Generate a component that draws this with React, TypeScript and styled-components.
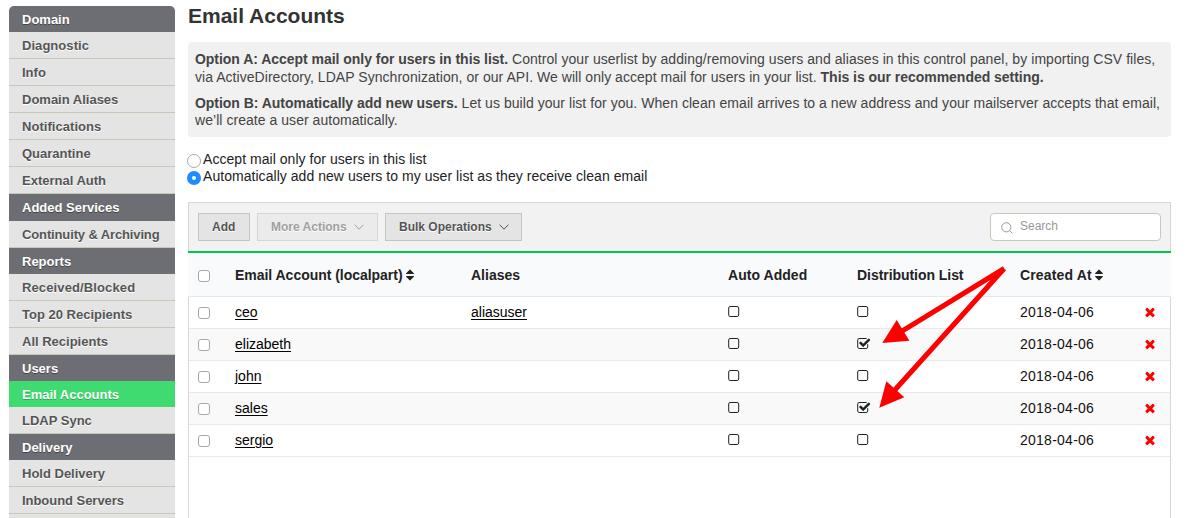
import React from "react";
import styled, { createGlobalStyle, css } from "styled-components";

const GlobalStyle = createGlobalStyle`
  * { box-sizing: border-box; }
  html, body { margin: 0; background: #fff; }
  body { font-family: "Liberation Sans", Arial, sans-serif; font-size: 14px; color: #222; overflow: hidden; }
`;

const Page = styled.div`
  position: relative;
  display: flex;
  width: 1200px;
  height: 518px;
  overflow: hidden;
`;

const Sidebar = styled.nav`
  width: 166px;
  margin: 6px 13px 0 9px;
  flex: none;
  border-radius: 5px 5px 0 0;
  overflow: hidden;
`;

type Kind = "heading" | "link" | "active";

const NavItem = styled.div<{ $kind: Kind; $height?: number; $spacing?: number }>`
  height: ${(p) => p.$height ?? (p.$kind === "link" ? 27 : 26)}px;
  line-height: 27px;
  padding-left: 13px;
  font-size: 13px;
  font-weight: bold;
  white-space: nowrap;
  letter-spacing: ${(p) => p.$spacing ?? 0}px;
  ${(p) =>
    p.$kind === "link"
      ? css`
          background: #e4e4e4;
          color: #555;
          text-shadow: 0 1px 0 #fff;
          border-bottom: 1px solid #c6c7b4;
        `
      : css`
          background: ${p.$kind === "active" ? "#3fdb70" : "#6d6e73"};
          color: #fff;
          text-shadow: 0 1px 0 ${p.$kind === "active" ? "#2fa955" : "#444"};
        `}
`;

const Main = styled.main`
  width: 983px;
  flex: none;
  display: flex;
  flex-direction: column;
`;

const Title = styled.h1`
  margin: 0;
  height: 42px;
  padding-top: 3px;
  font-size: 21px;
  line-height: 26px;
  color: #333;
`;

const InfoBox = styled.section`
  height: 95px;
  padding: 9px 7px;
  border-radius: 4px;
  background: #f1f1f1;
  color: #444;
`;

const Paragraph = styled.p<{ $leading: number }>`
  margin: 0 0 9px;
  line-height: ${(p) => p.$leading}px;
`;

const Line = styled.span<{ $spacing?: number }>`
  display: block;
  white-space: nowrap;
  letter-spacing: ${(p) => p.$spacing ?? 0.045}px;
`;

const Bold = styled.b`
  letter-spacing: -0.035px;
`;

const RadioGroup = styled.div`
  margin-top: 14px;
  height: 51px;
`;

const RadioRow = styled.label`
  display: flex;
  height: 17px;
  line-height: 17px;
  margin-left: -1px;
  gap: 2px;
  white-space: nowrap;
  letter-spacing: 0.045px;
`;

const Radio = styled.span<{ $on?: boolean }>`
  width: 14px;
  height: 14px;
  margin-top: 3px;
  border-radius: 50%;
  border: ${(p) => (p.$on ? "5px solid #1e8bff" : "1px solid #aaa")};
  background: #fff;
`;

const Panel = styled.section`
  flex: 1;
  border: 1px solid #d6d6d6;
  border-bottom: 0;
`;

const Toolbar = styled.div`
  display: flex;
  gap: 7px;
  height: 48px;
  padding: 10px 9px;
  background: #f2f2f2;
`;

const Button = styled.button<{ $width: number; $muted?: boolean }>`
  width: ${(p) => p.$width}px;
  height: 28px;
  padding: 0 0 0 13px;
  display: flex;
  align-items: center;
  gap: 7px;
  font: bold 12px "Liberation Sans", Arial, sans-serif;
  white-space: nowrap;
  color: ${(p) => (p.$muted ? "#a0a0a0" : "#555")};
  background: ${(p) => (p.$muted ? "#ebebeb" : "#e4e4e4")};
  border: 1px solid ${(p) => (p.$muted ? "#d6d6d6" : "#c4c4c4")};
  text-shadow: 0 1px 0 #fff;
`;

const SearchBox = styled.div`
  width: 171px;
  height: 28px;
  margin-left: auto;
  padding: 0 0 2px 10px;
  display: flex;
  align-items: center;
  gap: 7px;
  border: 1px solid #c8c8b8;
  border-radius: 4px;
  background: #fff;
  color: #999;
  font-size: 12px;
  svg { margin-top: 4px; }
`;

const grid = css`
  display: grid;
  grid-template-columns: 37px 236px 257px 129px 163px 122.6px 1fr;
  padding-left: 9px;
  align-items: center;
`;

const HeaderRow = styled.div`
  ${grid}
  height: 46px;
  margin: 0 -1px;
  padding-left: 10px;
  border-top: 2px solid #04c54c;
  border-bottom: 1px solid #e6e8e9;
  background: #f8fafc;
  font-weight: bold;
`;

const Row = styled.div<{ $alt: boolean }>`
  ${grid}
  height: 32px;
  padding-bottom: 2px;
  border-bottom: 1px solid #e9e9e9;
  background: ${(p) => (p.$alt ? "#f9f9f9" : "#fff")};
  color: #111;
`;

const Cell = styled.div<{ $spacing?: number }>`
  display: flex;
  align-items: center;
  gap: 3.5px;
  white-space: nowrap;
  letter-spacing: ${(p) => p.$spacing ?? 0}px;
`;

const Link = styled.a`
  color: #000;
  text-decoration: underline;
  text-underline-offset: 2px;
  text-decoration-thickness: 1px;
`;

const Checkbox = styled.span`
  width: 12px;
  height: 12px;
  margin-top: 2px;
  border: 1px solid #a8a8a8;
  border-radius: 3px;
  background: #fff;
`;

const Arrows = styled.svg`
  position: absolute;
  left: 870px;
  top: 260px;
`;

const icons = {
  times:
    "M1490 1322q0 40-28 68l-136 136q-28 28-68 28t-68-28l-294-294-294 294q-28 28-68 28t-68-28l-136-136q-28-28-28-68t28-68l294-294-294-294q-28-28-28-68t28-68l136-136q28-28 68-28t68 28l294 294 294-294q28-28 68-28t68 28l136 136q28 28 28 68t-28 68l-294 294 294 294q28 28 28 68z",
  square:
    "M1184 256h-832q-66 0-113 47t-47 113v832q0 66 47 113t113 47h832q66 0 113-47t47-113v-832q0-66-47-113t-113-47zm288 160v832q0 119-84.5 203.5t-203.5 84.5h-832q-119 0-203.5-84.5t-84.5-203.5v-832q0-119 84.5-203.5t203.5-84.5h832q119 0 203.5 84.5t84.5 203.5z",
  checked:
    "M1472 930v318q0 119-84.5 203.5t-203.5 84.5h-832q-119 0-203.5-84.5t-84.5-203.5v-832q0-119 84.5-203.5t203.5-84.5h832q63 0 117 25 15 7 18 23 3 17-9 29l-49 49q-10 10-23 10-3 0-9-2-23-6-45-6h-832q-66 0-113 47t-47 113v832q0 66 47 113t113 47h832q66 0 113-47t47-113v-254q0-13 9-22l64-64q10-10 23-10 6 0 12 3 20 8 20 29zm231-489l-814 814q-24 24-57 24t-57-24l-430-430q-24-24-24-57t24-57l110-110q24-24 57-24t57 24l263 263 647-647q24-24 57-24t57 24l110 110q24 24 24 57t-24 57z",
  sort: "M1408 1088q0 26-19 45l-448 448q-19 19-45 19t-45-19l-448-448q-19-19-19-45t19-45 45-19h896q26 0 45 19t19 45zm0-384q0 26-19 45t-45 19h-896q-26 0-45-19t-19-45 19-45l448-448q19-19 45-19t45 19l448 448q19 19 19 45z",
};

const Glyph = ({ name, color = "#222" }: { name: keyof typeof icons; color?: string }) =>
  name === "sort" ? (
    <svg width="8" height="14" viewBox="384 0 1024 1792" fill={color}>
      <path d={icons.sort} />
    </svg>
  ) : (
    <svg width="14" height="14" viewBox={name === "times" ? "0 0 1792 1792" : "40 0 1792 1792"} fill={color}>
      <path d={icons[name]} />
    </svg>
  );

const Chevron = ({ color }: { color: string }) => (
  <svg width="10" height="6" viewBox="0 0 10 6" fill="none" stroke={color}>
    <path d="M.6 .7 5 5.2 9.4 .7" />
  </svg>
);

const nav: { label: string; kind: Kind; height?: number; spacing?: number }[] = [
  { label: "Domain", kind: "heading" },
  { label: "Diagnostic", kind: "link", spacing: 0.05 },
  { label: "Info", kind: "link" },
  { label: "Domain Aliases", kind: "link" },
  { label: "Notifications", kind: "link", spacing: 0.05 },
  { label: "Quarantine", kind: "link" },
  { label: "External Auth", kind: "link" },
  { label: "Added Services", kind: "heading", height: 27 },
  { label: "Continuity & Archiving", kind: "link", spacing: -0.13 },
  { label: "Reports", kind: "heading" },
  { label: "Received/Blocked", kind: "link", spacing: 0.12 },
  { label: "Top 20 Recipients", kind: "link" },
  { label: "All Recipients", kind: "link" },
  { label: "Users", kind: "heading" },
  { label: "Email Accounts", kind: "active" },
  { label: "LDAP Sync", kind: "link" },
  { label: "Delivery", kind: "heading" },
  { label: "Hold Delivery", kind: "link" },
  { label: "Inbound Servers", kind: "link", spacing: -0.04 },
  { label: "", kind: "link" },
];

const accounts = [
  { name: "ceo", alias: "aliasuser", list: false },
  { name: "elizabeth", alias: "", list: true },
  { name: "john", alias: "", list: false },
  { name: "sales", alias: "", list: true },
  { name: "sergio", alias: "", list: false },
];

export default function App() {
  return (
    <Page>
      <GlobalStyle />
      <Sidebar>
        {nav.map((n, i) => (
          <NavItem key={i} $kind={n.kind} $height={n.height} $spacing={n.spacing}>
            {n.label}
          </NavItem>
        ))}
      </Sidebar>
      <Main>
        <Title>Email Accounts</Title>
        <InfoBox>
          <Paragraph $leading={17.5}>
            <Line $spacing={0.057}>
              <Bold>Option A: Accept mail only for users in this list.</Bold> Control your userlist by adding/removing
              users and aliases in this control panel, by importing CSV files,
            </Line>
            <Line>
              via ActiveDirectory, LDAP Synchronization, or our API. We will only accept mail for users in your list.{" "}
              <Bold>This is our recommended setting.</Bold>
            </Line>
          </Paragraph>
          <Paragraph $leading={17}>
            <Line>
              <Bold>Option B: Automatically add new users.</Bold> Let us build your list for you. When clean email
              arrives to a new address and your mailserver accepts that email,
            </Line>
            <Line>we’ll create a user automatically.</Line>
          </Paragraph>
        </InfoBox>
        <RadioGroup>
          <RadioRow>
            <Radio />
            Accept mail only for users in this list
          </RadioRow>
          <RadioRow>
            <Radio $on />
            Automatically add new users to my user list as they receive clean email
          </RadioRow>
        </RadioGroup>
        <Panel>
          <Toolbar>
            <Button $width={52}>Add</Button>
            <Button $width={121} $muted>
              More Actions <Chevron color="#a0a0a0" />
            </Button>
            <Button $width={137}>
              Bulk Operations <Chevron color="#555" />
            </Button>
            <SearchBox>
              <svg width="12" height="12" viewBox="0 0 12 12" fill="none" stroke="#999">
                <circle cx="5.3" cy="5.3" r="4.6" />
                <path d="M8.6 8.6 11.4 11.4" />
              </svg>
              Search
            </SearchBox>
          </Toolbar>
          <HeaderRow>
            <Cell>
              <Checkbox />
            </Cell>
            <Cell $spacing={-0.03}>
              Email Account (localpart) <Glyph name="sort" />
            </Cell>
            <Cell>Aliases</Cell>
            <Cell $spacing={0.05}>Auto Added</Cell>
            <Cell $spacing={-0.05}>Distribution List</Cell>
            <Cell $spacing={0.15}>
              Created At <Glyph name="sort" />
            </Cell>
          </HeaderRow>
          {accounts.map((a, i) => (
            <Row key={a.name} $alt={i % 2 === 1}>
              <Cell>
                <Checkbox />
              </Cell>
              <Cell>
                <Link>{a.name}</Link>
              </Cell>
              <Cell>{a.alias && <Link>{a.alias}</Link>}</Cell>
              <Cell>
                <Glyph name="square" />
              </Cell>
              <Cell>
                <Glyph name={a.list ? "checked" : "square"} />
              </Cell>
              <Cell $spacing={0.25}>2018-04-06</Cell>
              <Cell>
                <Glyph name="times" color="#f00" />
              </Cell>
            </Row>
          ))}
        </Panel>
      </Main>
      <Arrows width="145" height="155" viewBox="870 260 145 155" fill="#f00" stroke="#f00">
        <path d="M900 332.4 1004.2 268.5M893 392 1004.2 268.5" strokeWidth="5" fill="none" />
        <path d="M882.3 343 896.7 320 909.4 340.7zM879.3 407.7 886.3 381.3 904.3 397.3z" stroke="none" />
      </Arrows>
    </Page>
  );
}
